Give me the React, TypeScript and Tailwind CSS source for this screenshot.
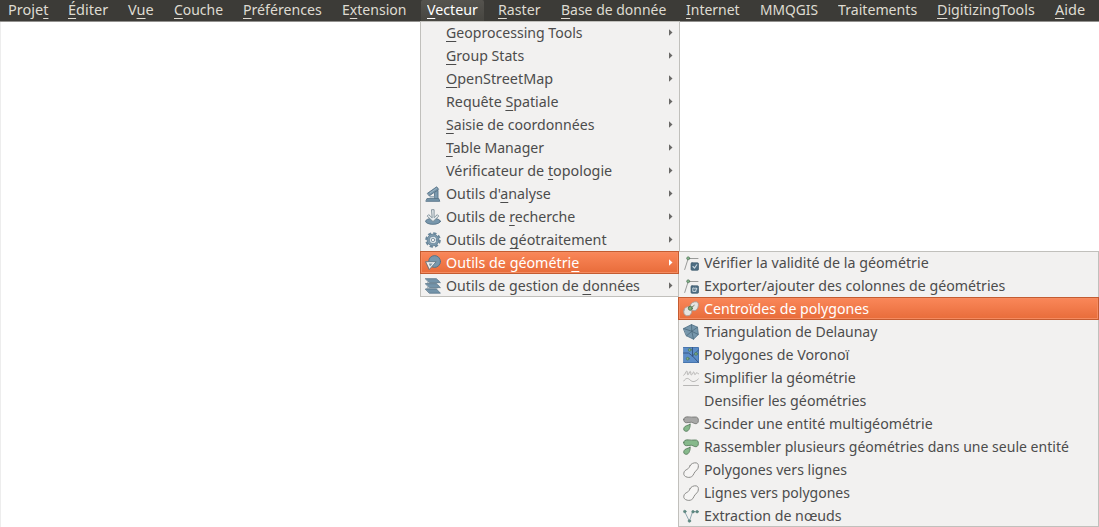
import { useLayoutEffect, useRef, useState, type ReactNode } from "react";

type Entry = { text: string; width: number; key?: number; icon?: ReactNode; active?: boolean };

/* Menu label fitted to a fixed width; `hot` is the index of the underlined mnemonic. */
function Label({ text, width, hot }: { text: string; width: number; hot?: number }) {
  const ref = useRef<HTMLSpanElement>(null);
  const [scale, setScale] = useState(1);
  useLayoutEffect(() => {
    if (ref.current) setScale(width / ref.current.offsetWidth);
  }, [width]);
  return (
    <span className="block shrink-0" style={{ width }}>
      <span className="block w-max origin-left" style={{ transform: `scaleX(${scale})` }}>
        <span ref={ref} className="inline-block whitespace-pre">
          {hot === undefined ? (
            text
          ) : (
            <>
              {text.slice(0, hot)}
              <span className="underline decoration-1 underline-offset-[3px] [text-decoration-skip-ink:none]">
                {text[hot]}
              </span>
              {text.slice(hot + 1)}
            </>
          )}
        </span>
      </span>
    </span>
  );
}

function Icon({ children }: { children: ReactNode }) {
  return (
    <svg className="block h-4 w-4" viewBox="0 0 16 16" fill="none" strokeLinejoin="round" strokeLinecap="round">
      {children}
    </svg>
  );
}

const Analysis = (
  <Icon>
    <path d="M9.8 6.200 13 4.200v9H10Z" fill="#7c9bb0" stroke="#587488" strokeWidth=".9" />
    <path d="M2.300 12.600h11.500l1 2.700H1.200Z" fill="#7695aa" stroke="#587488" strokeWidth=".9" />
    <path d="M2.600 7.200 11.700.8 13.600 3.300 4.500 9.700Z" fill="#7695aa" stroke="#587488" strokeWidth=".9" />
    <path d="M5 7 11.500 2.400" stroke="#a9bfcc" strokeWidth=".8" />
    <path d="M5 10.800h4" stroke="#839cab" strokeWidth="1.200" />
  </Icon>
);
const Research = (
  <Icon>
    <ellipse cx="8" cy="12.300" rx="7.400" ry="3" fill="#7897ac" stroke="#587488" strokeWidth=".9" />
    <path d="M6.900.7h2.200v7.900l3.200-3 1.500 1.500L8 12.600 2.200 7.100l1.500-1.500 3.200 3Z" fill="#e6ebed" stroke="#7b8b94" strokeWidth=".9" />
  </Icon>
);
const Gear = (
  <Icon>
    <circle cx="8" cy="8" r="6.800" stroke="#6a879b" strokeWidth="2" strokeDasharray="3.340 2" strokeLinecap="butt" />
    <circle cx="8" cy="8" r="5.800" fill="#819eb1" stroke="#6a879b" />
    <circle cx="8" cy="8" r="3.800" fill="#dbe4e9" stroke="#688498" strokeWidth=".9" />
    <circle cx="8" cy="8" r="1.700" fill="#f2f1f0" stroke="#7890a0" strokeWidth=".9" />
  </Icon>
);
const Geometry = (
  <Icon>
    <circle cx="9.600" cy="6.500" r="5.900" fill="#7898ad" stroke="#536f83" strokeWidth=".9" />
    <path d="M.9 6.700h10.300L4.500 14.300Z" fill="#eef0f0" stroke="#607684" strokeWidth=".9" />
    <path d="M3.800 8.600h3.900L5 11.500Z" fill="#7d96a6" />
  </Icon>
);
const Layers = (
  <Icon>
    <path d="M4.500 2.700h9L12 5.600H2Z M4.500 7.300h9L12 10.700H2Z" fill="#e4e9eb" stroke="#9dabb3" strokeWidth=".8" />
    <path d="M.6.700h10.800l4 3.900H4.600Z" fill="#7494aa" stroke="#587589" strokeWidth=".8" />
    <path d="M.6 5.700h10.800l4 3.900H4.600Z" fill="#7494aa" stroke="#587589" strokeWidth=".8" />
    <path d="M.6 11h10.800l4 4.200H4.600Z" fill="#7494aa" stroke="#587589" strokeWidth=".8" />
  </Icon>
);
const NodeLines = (
  <>
    <path d="M1.700 14.500 5.200 3.500H15" stroke="#9a9b9a" strokeWidth="1" />
    <circle cx="5.200" cy="3.300" r="1.500" fill="#82b288" stroke="#58775e" strokeWidth=".7" />
    <rect x="8" y="7.800" width="7.500" height="7.500" rx="1" fill="#4d6d83" stroke="#3f5b6f" strokeWidth=".7" />
  </>
);
const Check = (
  <Icon>
    {NodeLines}
    <path d="m10 11.500 1.500 1.600 2.300-3.300" stroke="#c9d6de" strokeWidth="1.100" />
  </Icon>
);
const Export = (
  <Icon>
    {NodeLines}
    <path d="M11 10H9.800v3.400H13v-1M11.500 10.800H14M12.900 9.700 14 10.800l-1.100 1.100" stroke="#d5dfe5" strokeWidth=".9" />
  </Icon>
);
const Centroid = (
  <Icon>
    <path d="M.9 9.200C1.500 6.500 3.900 5.300 6 6c2.700.9 3.200 3.300 2.600 5.400-.7 2.700-3.100 3.900-5.200 3.300C1 14 .300 11.500.9 9.200Z" fill="#e5e4e2" stroke="#a69a94" strokeWidth=".9" />
    <path d="M7.300 4.200C8 1.700 11 .500 13.300.8c1.700.2 2.300 1.700 2.100 3.500-.3 2.800-1.700 5.500-4.200 5.400C8.700 9.600 6.600 6.800 7.300 4.200Z" fill="#e5e4e2" stroke="#a69a94" strokeWidth=".9" />
    <circle cx="7.300" cy="7.300" r="2" fill="#7caf79" stroke="#52724e" strokeWidth=".9" />
    <path d="m9.200 5.900 2-1.500" stroke="#66775f" strokeWidth=".9" />
  </Icon>
);
const Delaunay = (
  <Icon>
    <path d="M.7 4.500 8.500.6 14.500 3.200 15.300 10.500 10.500 15.200 3.500 11.800Z" fill="#7797ac" stroke="#56758a" strokeWidth=".9" />
    <path d="M8.800 7.300.7 4.500M8.800 7.300 8.500.6M8.800 7.300l5.700-4.100M8.800 7.300l6.500 3.200M8.800 7.300 10.500 15.200M8.800 7.300l-5.300 4.500" stroke="#4c697c" strokeWidth=".8" />
  </Icon>
);
const Voronoi = (
  <Icon>
    <rect x=".5" y=".5" width="15" height="15" fill="#5c8dc8" stroke="#4775ae" />
    <path d="M.5 6 5.500 6 9.500 9 15.500 15.500M9.500 9V.5M9.500 9l6-6" stroke="#36547e" strokeWidth=".9" />
    <g fill="#80b286" stroke="#4c745a" strokeWidth=".7">
      <circle cx="6.700" cy="2.900" r="1.400" />
      <circle cx="13" cy="6.900" r="1.400" />
      <circle cx="4.700" cy="11.700" r="1.400" />
    </g>
  </Icon>
);
const Simplify = (
  <Icon>
    <path d="M.7 5.300C2.500 4.700 2.700 1 3.700 1s.2 3.900 1.200 3.900S6.200 1.300 7.200 1.300s.2 3.700 1.200 3.700 1.300-3 2.300-3 .1 2.600 1.200 2.600 1.100-2 1.900-2 .4 1.200 1.700 1.200M.7 11c2.500-3.300 4-3.300 6.400-1 2.700 2.500 5 2 8.200-1M.5 15.500h15" stroke="#b0afae" strokeWidth=".9" />
  </Icon>
);
function Blobs({ top, edge }: { top: string; edge: string }) {
  return (
    <Icon>
      <path d="M.7 3.500C.8 1.400 2.800.700 5 .900c2.200.3 4.500.3 7 .1 2.400-.2 3.500 1.300 3.400 3.600-.1 2.600-1.700 3.500-3.600 3-1.500-.4-2-1.300-3.500-1.400-1.800-.1-3 .7-5 .5C1.500 6.500.6 5.200.7 3.500Z" fill={top} stroke={edge} strokeWidth=".9" />
      <path d="M7 8.300c.4 1.500 0 2.700-.5 4-.7 2.100-2 3.200-3.700 3-1.900-.2-2.600-2-1.700-3.700C2.200 9.500 4.500 9.800 7 8.300Z" fill="#86b98b" stroke="#5b7f60" strokeWidth=".9" />
    </Icon>
  );
}
const Outline = (
  <Icon>
    <path d="M6.900 3.900C8 1.500 10.800.500 13.300.9c1.800.4 2.300 2.100 2 4.100-.4 2.600-1.800 3.200-3.200 4.600-1.200 1.200-1 2.400-2.200 3.900-1.500 1.800-3.500 2.200-5.700 1.700C1.800 14.600.5 13.200.8 11.200c.3-2.400 1.900-3.100 3.500-4C6 6.200 6.300 5.200 6.900 3.900Z" fill="#f6f5f4" stroke="#8c8c8a" strokeWidth="1" />
  </Icon>
);
const Nodes = (
  <Icon>
    <path d="m1.700 3.700 4.700 9.500 3.200-9.500h4.700" stroke="#91a8b0" />
    <g fill="#5e8b82" stroke="#5b827c" strokeWidth=".6">
      <circle cx="1.800" cy="3.500" r="1.300" />
      <circle cx="6.400" cy="13" r="1.300" />
      <circle cx="10" cy="3.700" r="1.300" />
      <circle cx="14.100" cy="3.700" r="1.300" />
    </g>
  </Icon>
);

const bar: Entry[] = [
  { text: "Projet", width: 40, key: 5 },
  { text: "Éditer", width: 40, key: 0 },
  { text: "Vue", width: 26, key: 1 },
  { text: "Couche", width: 49, key: 0 },
  { text: "Préférences", width: 79, key: 0 },
  { text: "Extension", width: 65, key: 1 },
  { text: "Vecteur", width: 51, key: 0, active: true },
  { text: "Raster", width: 43, key: 0 },
  { text: "Base de donnée", width: 105, key: 0 },
  { text: "Internet", width: 54, key: 0 },
  { text: "MMQGIS", width: 58 },
  { text: "Traitements", width: 79 },
  { text: "DigitizingTools", width: 98, key: 0 },
  { text: "Aide", width: 30, key: 0 },
];

const vector: Entry[] = [
  { text: "Geoprocessing Tools", width: 137, key: 0 },
  { text: "Group Stats", width: 78, key: 0 },
  { text: "OpenStreetMap", width: 107, key: 0 },
  { text: "Requête Spatiale", width: 113, key: 8 },
  { text: "Saisie de coordonnées", width: 148, key: 0 },
  { text: "Table Manager", width: 98, key: 0 },
  { text: "Vérificateur de topologie", width: 166, key: 16 },
  { text: "Outils d'analyse", width: 105, key: 9, icon: Analysis },
  { text: "Outils de recherche", width: 129, key: 10, icon: Research },
  { text: "Outils de géotraitement", width: 161, key: 10, icon: Gear },
  { text: "Outils de géométrie", width: 133, key: 18, icon: Geometry, active: true },
  { text: "Outils de gestion de données", width: 194, key: 21, icon: Layers },
];

const geometry: Entry[] = [
  { text: "Vérifier la validité de la géométrie", width: 225, icon: Check },
  { text: "Exporter/ajouter des colonnes de géométries", width: 301, icon: Export },
  { text: "Centroïdes de polygones", width: 165, icon: Centroid, active: true },
  { text: "Triangulation de Delaunay", width: 173, icon: Delaunay },
  { text: "Polygones de Voronoï", width: 145, icon: Voronoi },
  { text: "Simplifier la géométrie", width: 152, icon: Simplify },
  { text: "Densifier les géométries", width: 162 },
  { text: "Scinder une entité multigéométrie", width: 229, icon: <Blobs top="#a7a7a6" edge="#777876" /> },
  { text: "Rassembler plusieurs géométries dans une seule entité", width: 365, icon: <Blobs top="#86b98b" edge="#5b7f60" /> },
  { text: "Polygones vers lignes", width: 143, icon: Outline },
  { text: "Lignes vers polygones", width: 146, icon: Outline },
  { text: "Extraction de nœuds", width: 138, icon: Nodes },
];

function Menu({ items, arrows, className }: { items: Entry[]; arrows?: boolean; className: string }) {
  return (
    <ul className={`relative bg-[#f2f1f0] after:pointer-events-none after:absolute after:inset-0 after:border after:border-[#c1c0bc] ${className}`}>
      {items.map((item) => (
        <li
          key={item.text}
          className={`flex h-[23px] items-center leading-[23px] ${
            item.active
              ? "relative z-10 border border-[#c45c31] bg-linear-to-b from-[#fa8759] to-[#e86c3a] pl-[4px] text-white shadow-[inset_0_0_0_1px_#f58b60]"
              : "pl-[5px] text-[#4c4c4c]"
          } ${item.active && arrows ? "mr-px" : ""}`}
        >
          <span className="mr-[5px] w-4 shrink-0">{item.icon}</span>
          <Label text={item.text} width={item.width} hot={item.key} />
          {arrows && (
            <svg
              className={`ml-auto h-[7px] w-1 ${item.active ? "mr-[5px] fill-white" : "mr-[7px] fill-[#6a6967]"}`}
              viewBox="0 0 4 7"
            >
              <path d="M0 .3 3.500 3.500 0 6.700Z" />
            </svg>
          )}
        </li>
      ))}
    </ul>
  );
}

export default function App() {
  return (
    <div className="relative h-[527px] w-[1099px] overflow-hidden bg-white font-['Noto_Sans','Open_Sans',sans-serif] text-[14.5px]">
      <nav className="flex h-[22px] gap-2 border-b border-[#92918e] bg-[#3c3b37] pl-[2px] text-[#dfdbd2]">
        {bar.map((item) => (
          <div
            key={item.text}
            className={`h-[21px] px-[6px] leading-[18px] ${
              item.active ? "rounded-t-xs bg-linear-to-b from-[#55534e] to-[#474641] text-white" : ""
            }`}
          >
            <Label text={item.text} width={item.width} hot={item.key} />
          </div>
        ))}
      </nav>
      <div className="h-[505px] border-l border-[#ededed]" />
      <div className="absolute top-[21px] left-[420px] flex items-start">
        <Menu items={vector} arrows className="w-[260px]" />
        <Menu items={geometry} className="mt-[230px] -ml-[2px] w-[421px]" />
      </div>
    </div>
  );
}
